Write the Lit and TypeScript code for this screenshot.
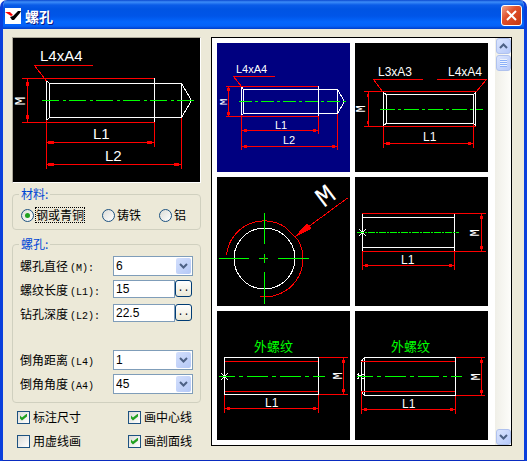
import { LitElement, html, svg, css } from "lit";
import { customElement, state } from "lit/decorators.js";
import { classMap } from "lit/directives/class-map.js";

const drawingStyles = css`
  svg { display: block; width: 100%; height: auto; background: #000; overflow: visible; }
  .sel { background: #000080; }
  .w, .r, .g { fill: none; stroke-width: 1; shape-rendering: crispEdges; }
  .w { stroke: #fff; }
  .r { stroke: #f00; }
  .g { stroke: #0f0; }
  .dot { fill: #f00; shape-rendering: crispEdges; }
  text { fill: #fff; font-family: "Liberation Sans", Arial, sans-serif; }
  .t11 { font-size: 11px; }
  .t12 { font-size: 12px; }
  .t15 { font-size: 15px; }
  .m { font-family: "Liberation Mono", monospace; text-anchor: middle; }
  .m.big { font-size: 28px; text-anchor: start; }
  .cn { fill: #0f0; font-size: 13px; font-family: "Noto Sans CJK SC", sans-serif; }
  .d27 { stroke-dasharray: 17 4 3 3; }
  .d22 { stroke-dasharray: 13 3 3 3; }
  .d24 { stroke-dasharray: 15 3 3 3; }
  .d11 { stroke-dasharray: 7 1 2 1; }
  .d33 { stroke-dasharray: 21 4 4 4; stroke-dashoffset: 5; }
`;

const dot = (x: number, y: number, w = 3, h = 3) =>
  svg`<rect class="dot" x=${x} y=${y} width=${w} height=${h}></rect>`;

const sideM = (x: number, y: number, size: string) =>
  svg`<text class="m ${size}" transform="translate(${x} ${y}) rotate(-90)">M</text>`;

const drilledLarge = svg`
  <path class="r" d="M80 27.5H21.5L33.5 43M9 40.5H141M9 84.5H141M14.5 40V84M33.5 82V131M141.5 84V109M168.5 80V131M33 104.5H141M33 126.5H168"></path>
  ${dot(13, 44, 3, 4)}${dot(13, 77, 3, 4)}
  ${dot(35, 103, 6, 3)}${dot(134, 103, 5, 3)}${dot(35, 125, 6, 3)}${dot(161, 125, 5, 3)}
  <path class="w" d="M33.5 43V82M33.5 43L36.5 45.5V79.5L33.5 82M36.5 45.5H168.5V79.5H36.5M141.5 40V84M168.5 45.5L178.5 62.5L168.5 79.5"></path>
  <path class="g d27" d="M29 62.5H184"></path>
  ${sideM(12, 63, "t15")}
  <text class="t15" x="27" y="23">L4xA4</text>
  <text class="t15" x="80" y="101">L1</text>
  <text class="t15" x="92" y="123">L2</text>`;

const drilled = svg`
  <path class="r" d="M58 33.5H16.5L24.5 43.5M9 43.5H101M9 73.5H101M11.5 43V73M24.5 72V107M101.5 73V91M120.5 71V107M24 87.5H101M24 103.5H120"></path>
  ${dot(10, 45)}${dot(10, 69)}${dot(27, 86)}${dot(96, 86)}${dot(27, 102)}${dot(115, 102)}
  <path class="w" d="M24.5 44V72M26.5 46.5H120.5V70.5H26.5ZM24.5 44L26.5 46.5M24.5 72L26.5 70.5M101.5 43V73M120.5 46.5L127.5 58.5L120.5 70.5"></path>
  <path class="g d22" d="M22 58.5H131"></path>
  ${sideM(10, 59, "t11")}
  <text class="t11" x="19" y="30">L4xA4</text>
  <text class="t11" x="58" y="86">L1</text>
  <text class="t11" x="66" y="101">L2</text>`;

const doubleChamfer = svg`
  <path class="r" d="M68 36.5H18.5L27.5 48.5M82 36.5H131.5L121 49M9 48.5H121M9 83.5H121M13.5 48V83M28.5 83V105M118.5 81V105M28 100.5H118"></path>
  ${dot(12, 51, 2)}${dot(12, 78, 2)}${dot(31, 99, 4)}${dot(113, 99)}
  <path class="w" d="M28.5 49V83M120.5 49V83M31.5 51.5H118.5V80.5H31.5ZM28.5 50L31.5 51.5M28.5 82L31.5 80.5M120.5 50L118.5 51.5M120.5 82L118.5 80.5"></path>
  <path class="g d24" d="M25 66.5H128"></path>
  ${sideM(10, 66, "t12")}
  <text class="t12" x="23" y="33">L3xA3</text>
  <text class="t12" x="93" y="33">L4xA4</text>
  <text class="t12" x="68" y="98">L1</text>`;

const endView = svg`
  <circle class="w" cx="47.5" cy="81.5" r="30.5"></circle>
  <path class="r" d="M9.5 78A38 38 0 0 1 68 50L81 63A38 38 0 0 1 43 119.5"></path>
  <path class="g" d="M2 81.5H32M42 81.5H51M61 81.5H92M47.5 36V67M47.5 77V86M47.5 95V127"></path>
  ${dot(47, 81, 1, 1)}
  <path class="r" d="M130.5 21L77.5 60"></path>
  <polygon class="dot" points="77.5,60 90,46 94.5,51.5"></polygon>
  <text class="m big" transform="translate(107 31) rotate(-37)">M</text>`;

const plainHole = svg`
  <path class="w" d="M7.5 37V74M99.5 37V74M7 40.5H99M7 70.5H99M4 52L11 59M11 52L4 59"></path>
  <path class="r" d="M7 36.5H131M7 74.5H131M126.5 36V74M7.5 75V93M99.5 75V93M7 88.5H99"></path>
  ${dot(125, 39)}${dot(125, 69)}${dot(10, 87)}${dot(94, 87)}
  <path class="g d11" d="M2 55.5H104"></path>
  ${sideM(124, 56, "t12")}
  <text class="t12" x="46" y="87">L1</text>`;

const outer = svg`
  <text class="cn" x="37" y="40">外螺纹</text>
  <path class="r" d="M8 50.5H101M8 80.5H101M102 46.5H131M102 83.5H131M126.5 46V83M7.5 84V102M101.5 84V102M7 97.5H101"></path>
  ${dot(125, 49)}${dot(125, 78)}${dot(10, 96)}${dot(96, 96)}
  <path class="w" d="M7.5 46.5H101.5V83.5H7.5ZM4 62L11 69M11 62L4 69"></path>
  <path class="g d33" d="M2 65.5H108"></path>
  ${sideM(125, 65, "t12")}
  <text class="t12" x="48" y="96">L1</text>`;

const outerChamfer = svg`
  <text class="cn" x="36" y="40">外螺纹</text>
  <path class="w" d="M9.5 46.5H100.5V84.5H9.5ZM9.5 46.5L6.5 50V81L9.5 84.5M3.5 62V68M2 63L6 66M2 68L6 64M6 63.5H9M6 67.5H9"></path>
  <path class="r" d="M6 50.5H100M6 80.5H100M101 46.5H130M101 84.5H130M126.5 46V84M6.5 81V103M100.5 85V103M6 98.5H100"></path>
  ${dot(125, 49)}${dot(125, 79)}${dot(9, 97)}${dot(95, 97)}
  <path class="g d33" d="M2 65.5H107"></path>
  ${sideM(125, 66, "t12")}
  <text class="t12" x="47" y="97">L1</text>`;

const chevron = (up = false) => html`
  <svg viewBox="0 0 9 6" width="9" height="6">
    <path d=${up ? "M1 5L4.5 1.5L8 5" : "M1 1L4.5 4.5L8 1"} fill="none" stroke="#4d6185" stroke-width="2"></path>
  </svg>`;

@customElement("hole-gallery")
export class HoleGallery extends LitElement {
  static styles = [
    drawingStyles,
    css`
      :host { display: flex; border: 1px solid #000; background: #fff; box-sizing: border-box; }
      .grid { flex: 1; display: grid; grid-template-columns: 1fr 1fr; gap: 5px; padding: 5px 7px 5px 5px; align-content: start; }
      .thumb { border: 0; padding: 0; margin: 0; background: none; display: block; }
      .bar { width: 16px; display: flex; flex-direction: column; align-items: center; gap: 1px;
        background: linear-gradient(90deg, #f0efe8, #fdfdfa); }
      .sb { width: 15px; height: 16px; box-sizing: border-box; padding: 0; border: 1px solid #b0c2ee; border-radius: 3px;
        background: linear-gradient(135deg, #dbe5fe, #b7cafa);
        display: flex; align-items: center; justify-content: center; }
      .down { margin-top: auto; }
      .bar svg { background: none; width: 9px; }
      .grip { width: 7px; height: 8px;
        background: repeating-linear-gradient(#eef4fe 0 1px, #8cb0f8 1px 2px); }
    `,
  ];

  @state() private chosen = 0;

  private drawings = [drilled, doubleChamfer, endView, plainHole, outer, outerChamfer];

  render() {
    return html`
      <div class="grid">
        ${this.drawings.map(
          (d, i) => html`<button class="thumb" type="button" @click=${() => (this.chosen = i)}>
            <svg class=${classMap({ sel: i === this.chosen })} viewBox="0 0 133 129">${d}</svg>
          </button>`
        )}
      </div>
      <div class="bar">
        <button class="sb" type="button">${chevron(true)}</button>
        <div class="sb"><span class="grip"></span></div>
        <button class="sb down" type="button">${chevron()}</button>
      </div>`;
  }
}

@customElement("field-row")
export class FieldRow extends LitElement {
  static properties = {
    label: { type: String },
    code: { type: String },
    value: { type: String },
    kind: { type: String },
  };
  declare label: string;
  declare code: string;
  declare value: string;
  declare kind: string;

  static styles = css`
    :host { display: flex; align-items: center; height: 20px; }
    label { flex: 1; font-size: 12px; line-height: 14px; white-space: nowrap; }
    .code { font: 10px "Liberation Mono", monospace; margin-left: 2px; }
    .box { width: 80px; height: 20px; display: flex; align-items: flex-start; position: relative; }
    select, input { font: 12px "Liberation Sans", Arial, sans-serif; color: #000; background: #fff; border: 1px solid #7f9db9;
      border-radius: 0; margin: 0; box-sizing: border-box; min-width: 0; }
    select { appearance: none; width: 100%; height: 20px; padding: 0 18px 0 2px; }
    input { flex: 1; height: 18px; padding: 0 2px; }
    .drop { position: absolute; right: 2px; top: 2px; width: 15px; height: 16px; border-radius: 2px; pointer-events: none;
      background: linear-gradient(135deg, #d3dffc, #b4c8f6); display: flex; align-items: center; justify-content: center; }
    .more { width: 17px; height: 17px; box-sizing: border-box; padding: 0; margin-right: 1px; border: 1px solid #003c74; border-radius: 3px;
      background: linear-gradient(#fff, #ece9d8); font: 10px/14px "Liberation Mono", monospace; color: #000; }
  `;

  render() {
    return html`
      <label for="f">${this.label}<span class="code">${this.code}</span></label>
      <div class="box">
        ${this.kind === "select"
          ? html`<select id="f"><option>${this.value}</option></select><span class="drop">${chevron()}</span>`
          : html`<input id="f" type="text" .value=${this.value} /><button class="more" type="button">..</button>`}
      </div>`;
  }
}

@customElement("app-root")
export class AppRoot extends LitElement {
  static styles = [
    drawingStyles,
    css`
      :host { display: flex; flex-direction: column; min-height: 100vh; box-sizing: border-box; background: #ece9d8; color: #000;
        font-family: "Noto Sans CJK SC", sans-serif; font-size: 12px; line-height: 14px;
        border: 3px solid #0a3fdc; border-top: 0; border-bottom-color: #0a2cc0; border-radius: 7px 7px 0 0; overflow: hidden; }
      .title { display: flex; align-items: center; gap: 4px; height: 29px; padding: 2px 2px 0; box-sizing: border-box;
        background: linear-gradient(#0a48cf 0, #3c8cf8 2px, #0a5ce8 5px, #0054e3 9px, #0055e8 16px, #0466fc 22px, #0462f8 26px, #003dc9 29px); }
      .title svg { width: 16px; height: 16px; background: #fff; }
      h1 { flex: 1; margin: 0; font-size: 14px; line-height: 18px; color: #fff; text-shadow: 1px 1px #0a1883; }
      .close { width: 21px; height: 21px; box-sizing: border-box; padding: 0; border: 1px solid #fff; border-radius: 3px;
        background: linear-gradient(135deg, #f0a58c, #e0502c 40%, #c83810); display: flex; align-items: center; justify-content: center; }
      .close svg { width: 13px; height: 13px; background: none; }
      .body { display: flex; gap: 10px; align-items: flex-start; padding: 8px 12px 12px 9px; }
      .side { flex: 0 0 189px; }
      hole-gallery { flex: 1; }
      .preview { border: 1px solid; border-color: #aca899 #fff #fff #aca899; }
      fieldset { margin: 4px 0 0; padding: 0 7px; border: 1px solid #d0d0bf; border-radius: 4px; min-width: 0; }
      fieldset + fieldset { margin-top: 7px; }
      legend { color: #0046d5; padding: 0 2px; margin-left: -1px; line-height: 14px; height: 14px; }
      .radios { display: flex; gap: 18px; height: 28px; align-items: center; padding-left: 1px; }
      .opt { display: flex; align-items: center; gap: 2px; white-space: nowrap; }
      .focus { outline: 1px dotted #000; }
      input { appearance: none; margin: 0; width: 13px; height: 13px; box-sizing: border-box; border: 1px solid #1d5281;
        background: linear-gradient(135deg, #dcdcd7, #fff); display: grid; place-items: center; flex: none; }
      input[type="radio"] { border-radius: 50%; }
      input[type="radio"]:checked::before { content: ""; width: 5px; height: 5px; border-radius: 50%; background: #21a121; }
      input[type="checkbox"]:checked::before { content: ""; width: 7px; height: 7px; background: #21a121;
        clip-path: polygon(0 28%, 28% 57%, 100% 0, 100% 43%, 28% 100%, 0 71%); }
      .fields { display: flex; flex-direction: column; gap: 4px; padding: 5px 0 8px; }
      .gap { margin-top: 22px; }
      .checks { display: grid; grid-template-columns: 111px 1fr; row-gap: 10px; padding: 7px 0 0 5px; }
      .checks .opt { gap: 3px; }
    `,
  ];

  render() {
    return html`
      <header class="title">
        <svg viewBox="0 0 16 16">
          <path d="M0 4H5L8 7L6 8L3 6Z" fill="#f00"></path>
          <path d="M5 9L8 8L13 3H16L15 5L9 12H7Z" fill="#000"></path>
        </svg>
        <h1>螺孔</h1>
        <button class="close" type="button">
          <svg viewBox="0 0 13 13"><path d="M2 2L11 11M11 2L2 11" stroke="#fff" stroke-width="2"></path></svg>
        </button>
      </header>
      <main class="body">
        <div class="side">
          <div class="preview"><svg viewBox="0 0 187 144">${drilledLarge}</svg></div>
          <fieldset>
            <legend>材料:</legend>
            <div class="radios">
              <label class="opt"><input type="radio" name="mat" checked /><span class="focus">钢或青铜</span></label>
              <label class="opt"><input type="radio" name="mat" />铸铁</label>
              <label class="opt"><input type="radio" name="mat" />铝</label>
            </div>
          </fieldset>
          <fieldset>
            <legend>螺孔:</legend>
            <div class="fields">
              <field-row kind="select" label="螺孔直径" code="(M):" value="6"></field-row>
              <field-row kind="text" label="螺纹长度" code="(L1):" value="15"></field-row>
              <field-row kind="text" label="钻孔深度" code="(L2):" value="22.5"></field-row>
              <field-row class="gap" kind="select" label="倒角距离" code="(L4)" value="1"></field-row>
              <field-row kind="select" label="倒角角度" code="(A4)" value="45"></field-row>
            </div>
          </fieldset>
          <div class="checks">
            <label class="opt"><input type="checkbox" checked />标注尺寸</label>
            <label class="opt"><input type="checkbox" checked />画中心线</label>
            <label class="opt"><input type="checkbox" />用虚线画</label>
            <label class="opt"><input type="checkbox" checked />画剖面线</label>
          </div>
        </div>
        <hole-gallery></hole-gallery>
      </main>`;
  }
}
